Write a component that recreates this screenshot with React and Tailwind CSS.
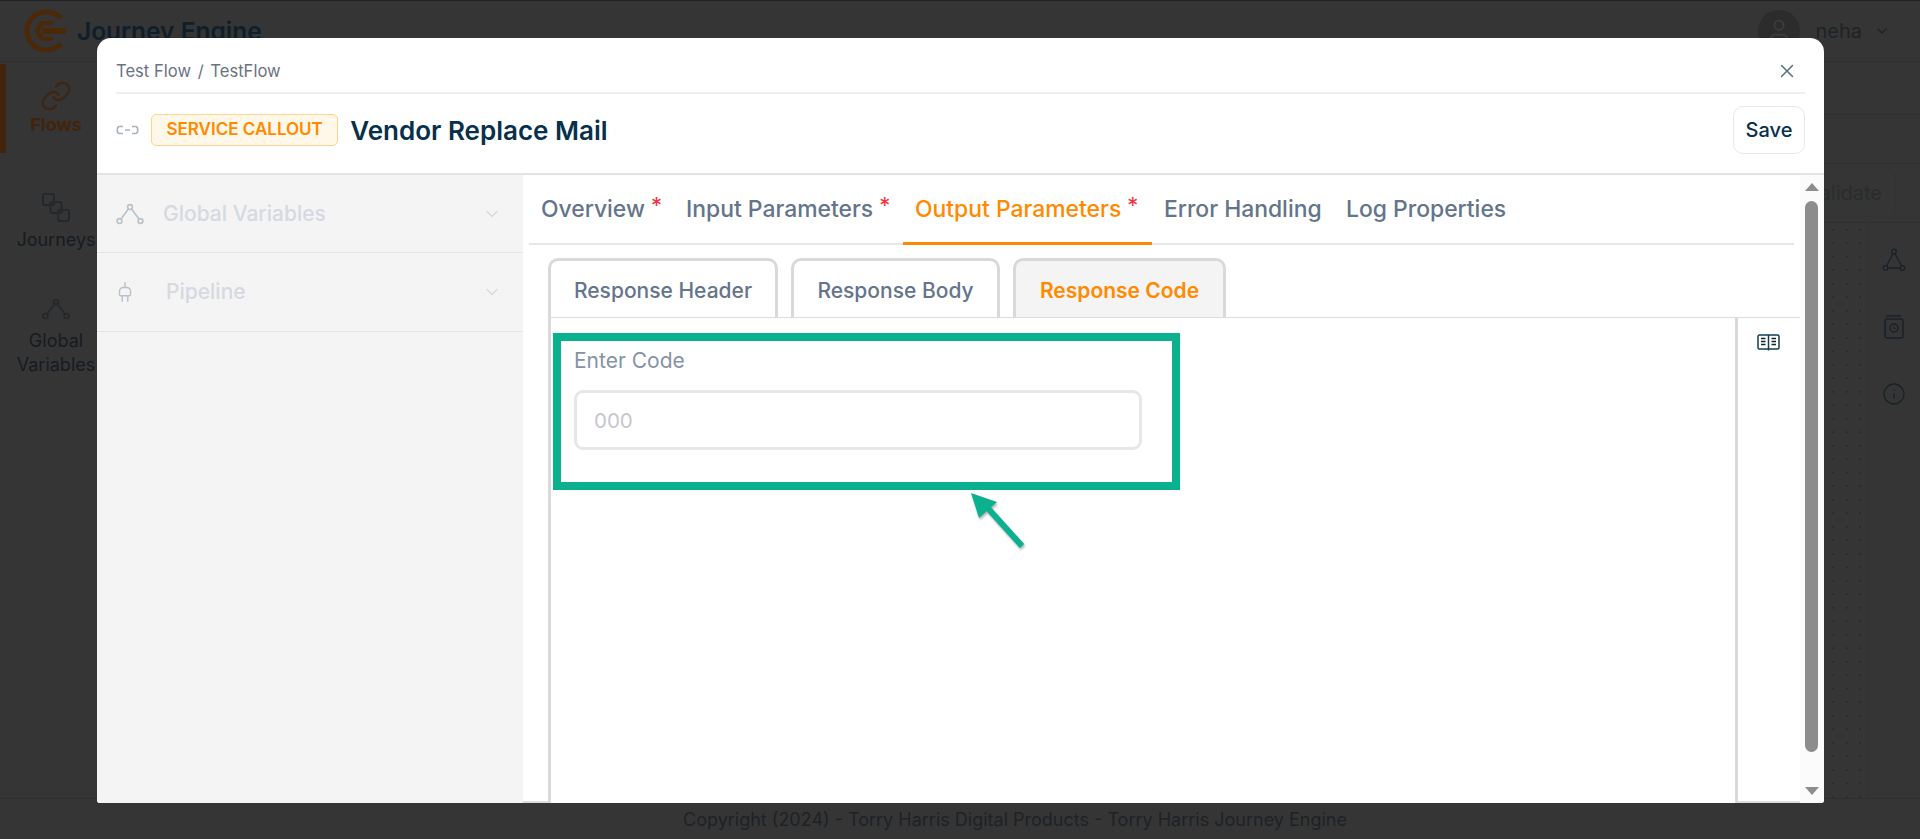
import { ChevronDown, Info, Link, Plug, User, X } from "lucide-react";

const mainTabs = [
  { label: "Overview", star: true, width: "w-[145px]" },
  { label: "Input Parameters", star: true, width: "w-[229px]" },
  { label: "Output Parameters", star: true, width: "w-[249px]", active: true },
  { label: "Error Handling", width: "w-[182px]" },
  { label: "Log Properties", width: "w-[190px]" },
];

const subTabs = [
  { label: "Response Header", width: "w-[230px]" },
  { label: "Response Body", width: "w-[209px]" },
  { label: "Response Code", width: "w-[213px]", active: true },
];

const Logo = () => (
  <svg width="44" height="44" viewBox="0 0 44 44" fill="none" stroke="#4a2808" strokeWidth="5">
    <path d="M37 9C33 5 28 3 22 3C11 3 3 12 3 22C3 32 11 41 22 41C28 41 33 39 37 35" />
    <path d="M29 14H18L13 22L18 30H29" strokeWidth="4" />
    <path d="M18 22H42" strokeWidth="6" />
  </svg>
);

const NodesIcon = ({ className, color }) => (
  <svg className={className} viewBox="0 0 28 22" fill="none" stroke={color} strokeWidth="1.6">
    <circle cx="14" cy="4" r="2.4" />
    <circle cx="3.5" cy="18" r="2.4" />
    <circle cx="24.5" cy="18" r="2.4" />
    <path d="M12.5 6L5 16M15.5 6L23 16" />
  </svg>
);

const SquaresIcon = () => (
  <svg width="28" height="30" viewBox="0 0 28 30" fill="none" stroke="#23282c" strokeWidth="2">
    <rect x="1" y="1" width="11" height="11" rx="2" />
    <rect x="8.5" y="9" width="11" height="11" rx="2" />
    <rect x="16" y="17" width="11" height="11" rx="2" />
  </svg>
);

const ChainIcon = () => (
  <svg width="23" height="10" viewBox="0 0 23 10" fill="none" stroke="#a9b4bd" strokeWidth="1.6">
    <path d="M7 1.5H3.5C0.5 1.5 0.5 8.5 3.5 8.5H7" />
    <path d="M16 1.5H19.5C22.5 1.5 22.5 8.5 19.5 8.5H16" />
    <path d="M9 5H14" />
  </svg>
);

const BookIcon = () => (
  <svg width="23" height="17" viewBox="0 0 23 17" fill="none" stroke="#0f3f57" strokeWidth="1.5">
    <rect x="1" y="1" width="21" height="14" rx="1.5" />
    <path d="M11.5 1V16.5" />
    <path d="M4 4.5H8.5M4 7.5H8.5M4 10.5H8.5M14.5 4.5H19M14.5 7.5H19M14.5 10.5H19" strokeWidth="1.3" stroke="#12232d" />
  </svg>
);

const TriangleIcon = () => (
  <svg width="24" height="24" viewBox="0 0 24 24" fill="none" stroke="#182228" strokeWidth="1.3">
    <circle cx="12" cy="3.5" r="2.3" />
    <circle cx="3.5" cy="20" r="2.3" />
    <circle cx="20.5" cy="20" r="2.3" />
    <path d="M11 5.5L4.5 18M13 5.5L19.5 18M6 20H18" />
  </svg>
);

const BookClockIcon = () => (
  <svg width="20" height="24" viewBox="0 0 20 24" fill="none" stroke="#182228" strokeWidth="1.5">
    <path d="M2 1H17" />
    <rect x="1" y="4" width="18" height="19" rx="2" />
    <circle cx="10" cy="13" r="4" />
    <path d="M10 11V13.5H11.5" strokeWidth="1.1" />
  </svg>
);

const Background = () => (
  <div className="flex flex-col h-[839px] bg-[#353535] border-t border-[#222] text-[#1b2228]">
    <div className="flex items-center h-[61px] shrink-0 border-b border-[#2f2f2f] pl-[24px] pr-[30px]">
      <Logo />
      <span className="ml-[9px] text-[24.5px] font-semibold text-[#0f1e29]">Journey Engine</span>
      <div className="ml-auto flex items-center">
        <div className="flex items-center justify-center w-[42px] h-[42px] rounded-full bg-[#2c2c2c]">
          <User size={28} strokeWidth={1.5} color="#3c3c3c" />
        </div>
        <span className="ml-[15px] text-[20px] text-[#1d2327]">neha</span>
        <ChevronDown size={16} className="ml-[12px]" color="#1d2327" />
      </div>
    </div>
    <div className="flex flex-1 min-h-0">
      <div className="w-[112px] shrink-0 pt-[2px]">
        <div className="flex flex-col items-center h-[89px] border-l-[6px] border-[#42240c] pr-[6px] pt-[16px]">
          <Link size={32} strokeWidth={1.6} color="#42240c" />
          <span className="-mt-[1px] text-[18px] font-bold text-[#42240c]">Flows</span>
        </div>
        <div className="flex flex-col items-center mt-[40px]">
          <SquaresIcon />
          <span className="mt-[3px] text-[18px] text-[#151c22] whitespace-nowrap">Journeys</span>
        </div>
        <div className="flex flex-col items-center mt-[45px] text-[18px] leading-[24px] text-center text-[#151c22]">
          <NodesIcon className="w-[28px] h-[22px] mb-[9px]" color="#23282c" />
          Global
          <br />
          Variables
        </div>
      </div>
      <div className="flex-1 flex flex-col">
        <div className="h-[53px] border-b border-[#2f2f2f]" />
        <div className="h-[49px] border-b border-[#2f2f2f]" />
        <div className="flex items-center justify-end h-[59px] border-b border-[#2f2f2f] pr-[24px]">
          <div className="flex items-center h-[47px] px-[13px] rounded-[8px] border border-[#333] text-[20px] text-[#292c2e]">Validate</div>
        </div>
        <div className="flex flex-1">
          <div className="flex-1 bg-[radial-gradient(#292929_1px,transparent_1.2px)] bg-[size:13.5px_13.5px]" />
          <div className="flex flex-col items-center w-[53px] gap-[43px] pt-[25px] border-l border-[#323232]">
            <TriangleIcon />
            <BookClockIcon />
            <Info size={24} strokeWidth={1.3} color="#182228" />
          </div>
        </div>
      </div>
    </div>
    <div className="flex items-center justify-center h-[41px] shrink-0 border-t border-[#2f2f2f] pl-[110px] text-[18px] text-[#1d2226]">
      Copyright (2024) - Torry Harris Digital Products - Torry Harris Journey Engine
    </div>
  </div>
);

const MainTab = ({ tab }) => (
  <div
    className={`flex items-start justify-start h-[70px] pl-[12px] pt-[18px] ${tab.width} ${
      tab.active ? "border-b-[3px] border-[#ff8a00] text-[#ff8a00]" : "text-[#64748b]"
    }`}
  >
    <span className="text-[22.9px] font-medium leading-[32px] whitespace-nowrap">{tab.label}</span>
    {tab.star && <span className="ml-[6px] text-[22px] leading-[24px] text-[#f4303c]">*</span>}
  </div>
);

const SubTab = ({ tab }) => (
  <div
    className={`flex items-center justify-center h-[59px] pt-[3px] rounded-t-[10px] border-[3px] border-b-0 border-[#d9d9d9] text-[21px] font-medium ${tab.width} ${
      tab.active ? "bg-[#f4f4f4] text-[#ff8a00] font-semibold" : "bg-white text-[#64748b]"
    }`}
  >
    {tab.label}
  </div>
);

const Scrollbar = () => (
  <div className="flex flex-col items-center w-[24px] shrink-0 bg-[#fbfbfb] pt-[8px] pr-[1px]">
    <div className="w-0 h-0 border-x-[7px] border-x-transparent border-b-[8px] border-b-[#8c8c8c]" />
    <div className="mt-[10px] w-[13px] h-[551px] rounded-full bg-[#8c8c8c]" />
    <div className="mt-[35px] w-0 h-0 border-x-[7px] border-x-transparent border-t-[8px] border-t-[#8c8c8c]" />
  </div>
);

const Modal = () => (
  <div className="absolute left-[97px] top-[38px] flex flex-col w-[1727px] h-[765px] rounded-t-[14px] rounded-b-[3px] overflow-hidden bg-white">
    <div className="px-[19px]">
      <div className="flex items-center justify-between h-[56px] pt-[12px] border-b-2 border-[#eeeff2]">
        <span className="text-[16.6px] text-[#6b7280]">
          Test Flow <span className="mx-[2px]">/</span> TestFlow
        </span>
        <X size={22} strokeWidth={1.6} color="#55707f" className="mr-[7px]" />
      </div>
      <div className="flex items-center h-[79px] pb-[7px]">
        <ChainIcon />
        <span className="ml-[12px] flex items-center h-[32px] px-[14.5px] rounded-[5px] border border-[#fdd48f] bg-[#fff7e8] text-[17px] font-semibold text-[#ff8a00]">
          SERVICE CALLOUT
        </span>
        <span className="ml-[12px] text-[26px] font-semibold text-[#07304a]">Vendor Replace Mail</span>
        <button className="ml-auto h-[48px] w-[72px] rounded-[10px] border border-[#e5e7eb] bg-white text-[20px] font-medium text-[#07304a]">
          Save
        </button>
      </div>
    </div>
    <div className="flex flex-1 min-h-0 border-t-2 border-[#e4e4e4]">
      <div className="w-[426px] shrink-0 bg-[#f4f4f4]">
        <div className="flex items-center h-[78px] border-b border-[#e5e5e5] pl-[19px] pr-[21px]">
          <NodesIcon className="w-[28px] h-[22px]" color="#b9c2ca" />
          <span className="ml-[19px] text-[21px] font-medium text-[#d6d9e1]">Global Variables</span>
          <ChevronDown size={20} strokeWidth={1.6} className="ml-auto" color="#d6d9e1" />
        </div>
        <div className="flex items-center h-[79px] border-b border-[#e5e5e5] pl-[17px] pr-[21px]">
          <Plug size={22} strokeWidth={1.6} color="#b9c2ca" className="rotate-180" />
          <span className="ml-[30px] text-[21px] font-medium text-[#d6d9e1]">Pipeline</span>
          <ChevronDown size={20} strokeWidth={1.6} className="ml-auto" color="#d6d9e1" />
        </div>
      </div>
      <div className="flex flex-1 min-w-0">
        <div className="flex flex-col flex-1 min-w-0 border-b-2 border-[#dcdcdc]">
          <div className="flex ml-[6px] mr-[6px] h-[70px] border-b-2 border-[#e5e7ef]">
            {mainTabs.map((tab) => (
              <MainTab key={tab.label} tab={tab} />
            ))}
          </div>
          <div className="flex ml-[25px] gap-[13px] mt-[13px] border-b border-[#dcdcdc]">
            {subTabs.map((tab) => (
              <SubTab key={tab.label} tab={tab} />
            ))}
          </div>
          <div className="flex flex-1 min-h-0 ml-[25px] -mb-[2px]">
            <div className="flex-1 min-w-0 border-x-[3px] border-[#d9d9d9] bg-white pt-[15px] pl-[2px]">
              <div className="w-[627px] h-[157px] border-[8px] border-[#0bb08f] pl-[13px]">
                <div className="text-[21px] leading-[28px] mt-[6px] text-[#8593a5]">Enter Code</div>
                <input
                  readOnly
                  placeholder="000"
                  className="mt-[15px] w-[568px] h-[60px] rounded-[9px] border-[3px] border-[#e5e7eb] pl-[17px] text-[20.5px] outline-none placeholder:text-[#c4c7cc]"
                />
              </div>
            </div>
            <div className="flex justify-center w-[62px] shrink-0 pt-[16px] pr-[1px]">
              <BookIcon />
            </div>
          </div>
        </div>
        <Scrollbar />
      </div>
    </div>
    {/* annotation arrow */}
    <svg className="absolute left-[868px] top-[452px] drop-shadow-[1px_2px_1px_rgba(0,0,0,0.3)]" width="62" height="62" viewBox="0 0 62 62">
      <path d="M57 56L20 15" stroke="#0bb08f" strokeWidth="6" />
      <path d="M6 3L32 12L14 28Z" fill="#0bb08f" />
    </svg>
  </div>
);

export default function App() {
  return (
    <div className="relative h-[839px] w-[1920px] overflow-hidden font-['Inter',sans-serif]">
      <Background />
      <Modal />
    </div>
  );
}
